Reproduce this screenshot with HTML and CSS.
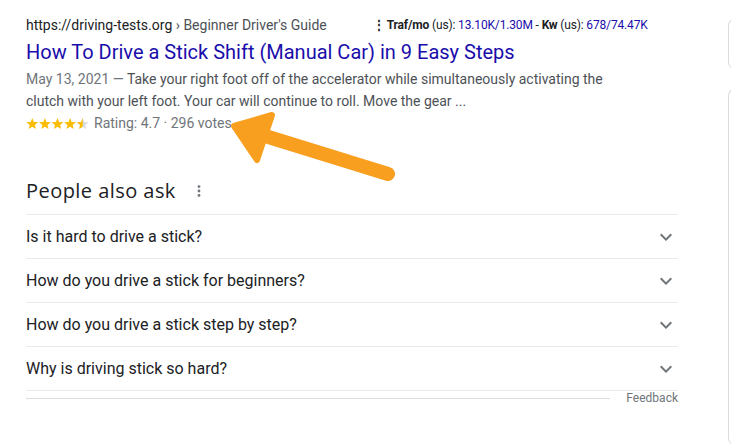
FILE: index.html
```html
<!DOCTYPE html>
<html>
<head>
<meta charset="utf-8">
<link rel="stylesheet" href="styles.css">
</head>
<body>
<div class="page">
  <div class="main">
    <div class="result">
      <div class="url-row">
        <span class="url">https://driving-tests.org</span><span class="crumb">&nbsp;› Beginner Driver's Guide</span>
        <span class="ke"><span class="ke-dots">⋮</span><b>Traf/mo</b> (us): <span class="ke-val">13.10K/1.30M</span> - <b>Kw</b> (us): <span class="ke-val">678/74.47K</span></span>
      </div>
      <div class="title">How To Drive a Stick Shift (Manual Car) in 9 Easy Steps</div>
      <div class="snippet"><span class="date">May 13, 2021 — </span>Take your right foot off of the accelerator while simultaneously activating the clutch with your left foot. Your car will continue to roll. Move the gear ...</div>
      <div class="rating">
        <span class="stars">
          <svg width="64" height="13" viewBox="0 0 64 13">
            <defs>
              <path id="st" d="M6.3 0.6 L7.9 4.6 L12.2 4.9 L8.9 7.6 L9.9 11.8 L6.3 9.5 L2.7 11.8 L3.7 7.6 L0.4 4.9 L4.7 4.6 Z"/>
              <clipPath id="half"><rect x="0" y="0" width="6.3" height="13"/></clipPath>
            </defs>
            <use href="#st" x="0" y="0.3" fill="#fbbc04"/>
            <use href="#st" x="12.6" y="0.3" fill="#fbbc04"/>
            <use href="#st" x="25.2" y="0.3" fill="#fbbc04"/>
            <use href="#st" x="37.8" y="0.3" fill="#fbbc04"/>
            <g transform="translate(50.4 0.3)">
              <use href="#st" fill="#dadce0"/>
              <use href="#st" fill="#fbbc04" clip-path="url(#half)"/>
            </g>
          </svg>
        </span>
        <span class="rating-text">Rating: 4.7 · 296 votes</span>
      </div>
    </div>

    <div class="paa">
      <div class="paa-head">
        <span class="paa-title">People also ask</span>
        <svg class="vdots" width="4" height="12" viewBox="0 0 4 12"><circle cx="2" cy="1.6" r="1.4"/><circle cx="2" cy="6" r="1.4"/><circle cx="2" cy="10.4" r="1.4"/></svg>
      </div>
      <div class="q"><span>Is it hard to drive a stick?</span><svg class="chev" width="24" height="24" viewBox="0 0 24 24"><path d="M16.59 8.59L12 13.17 7.41 8.59 6 10l6 6 6-6z"/></svg></div>
      <div class="q"><span>How do you drive a stick for beginners?</span><svg class="chev" width="24" height="24" viewBox="0 0 24 24"><path d="M16.59 8.59L12 13.17 7.41 8.59 6 10l6 6 6-6z"/></svg></div>
      <div class="q"><span>How do you drive a stick step by step?</span><svg class="chev" width="24" height="24" viewBox="0 0 24 24"><path d="M16.59 8.59L12 13.17 7.41 8.59 6 10l6 6 6-6z"/></svg></div>
      <div class="q"><span>Why is driving stick so hard?</span><svg class="chev" width="24" height="24" viewBox="0 0 24 24"><path d="M16.59 8.59L12 13.17 7.41 8.59 6 10l6 6 6-6z"/></svg></div>
      <div class="feedback-row">
        <div class="fb-line"></div>
        <span class="feedback">Feedback</span>
      </div>
    </div>
  </div>
  <div class="side">
    <div class="card card-1"></div>
    <div class="card card-2"></div>
  </div>
</div>
<svg class="arrow" width="731" height="446" viewBox="0 0 731 446">
  <line x1="388" y1="174" x2="262" y2="135" stroke="#f99f1f" stroke-width="14" stroke-linecap="round"/>
  <path d="M272 115 L234 126 L257 160 Z" fill="#f99f1f" stroke="#f99f1f" stroke-width="6" stroke-linejoin="round"/>
</svg>
</body>
</html>
```

FILE: styles.css
```css
html, body {
  margin: 0;
  padding: 0;
  background: #fff;
}
body {
  font-family: Roboto, Arial, sans-serif;
  color: #202124;
  width: 731px;
  height: 446px;
  overflow: hidden;
  position: relative;
}
.page {
  display: flex;
  padding-left: 26px;
  height: 446px;
  overflow: hidden;
}
.main {
  width: 652px;
  flex: none;
}
.result {
  padding-top: 14px;
}
.url-row {
  height: 22px;
  line-height: 22px;
  font-size: 14px;
  white-space: nowrap;
  display: flex;
  align-items: center;
}
.url { color: #202124; }
.crumb { color: #4d5156; }
.ke {
  font-size: 12px;
  letter-spacing: -0.15px;
  color: #202124;
  margin-left: 46px;
}
.ke-dots {
  font-weight: bold;
  margin-right: 2px;
}
.ke-val { color: #1a0dab; }
.title {
  font-size: 20px;
  line-height: 28px;
  margin-top: 2px;
  color: #1a0dab;
  white-space: nowrap;
}
.snippet {
  font-size: 14px;
  line-height: 22px;
  color: #4d5156;
  width: 590px;
  margin-top: 2px;
}
.date { color: #70757a; }
.rating {
  display: flex;
  align-items: center;
  height: 22px;
  font-size: 14px;
  color: #70757a;
}
.stars {
  display: flex;
  margin-right: 4px;
}
.paa {
  margin-top: 43px;
}
.paa-head {
  display: flex;
  align-items: center;
  height: 28px;
  padding-bottom: 9px;
}
.paa-title {
  font-family: "Open Sans", Roboto, sans-serif;
  font-size: 20px;
  letter-spacing: 0.45px;
  line-height: 28px;
  color: #202124;
}
.vdots {
  fill: #70757a;
  margin-left: 21px;
}
.q {
  border-top: 1px solid #ebebeb;
  height: 43px;
  display: flex;
  align-items: center;
  justify-content: space-between;
  font-size: 16px;
  color: #202124;
}
.chev {
  fill: #70757a;
}
.feedback-row {
  border-top: 1px solid #ebebeb;
  display: flex;
  align-items: center;
  height: 14px;
}
.fb-line {
  flex: 1;
  height: 1px;
  background: #dadce0;
  margin-right: 16px;
}
.feedback {
  font-size: 12px;
  color: #70757a;
}
.side {
  margin-left: 50px;
  padding-top: 18px;
  width: 3px;
  overflow: hidden;
  display: flex;
  flex-direction: column;
  gap: 18px;
}
.card {
  width: 20px;
  flex: none;
  border: 1px solid #dadce0;
  border-right: none;
  border-radius: 8px 0 0 8px;
}
.card-1 { height: 50px; }
.card-2 { height: 356px; }
.arrow {
  position: absolute;
  left: 0;
  top: 0;
  pointer-events: none;
}
```
